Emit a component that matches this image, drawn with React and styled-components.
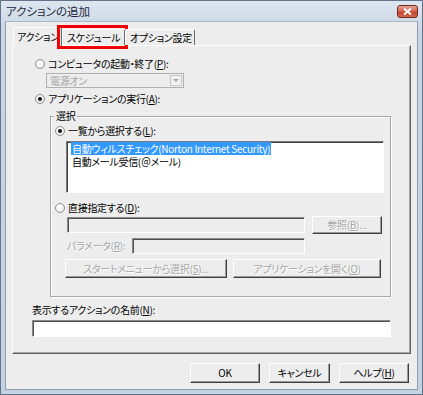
import React from 'react';
import styled, { createGlobalStyle } from 'styled-components';

const GlobalStyle = createGlobalStyle`
  html, body {
    margin: 0;
    padding: 0;
    background: #fff;
  }
  body {
    font-family: "Noto Sans CJK JP", "Liberation Sans", sans-serif;
  }
`;

const Window = styled.div`
  width: 423px;
  height: 395px;
  box-sizing: border-box;
  display: flex;
  flex-direction: column;
  padding: 0 4px 4px;
  border: 1px solid #60748c;
  background: linear-gradient(#dde6ef, #c9d6e4 30px, #c4d2e1);
  font-size: 10px;
  letter-spacing: -0.3px;
  font-feature-settings: "palt";
  color: #000;
`;

const TitleBar = styled.div`
  height: 20px;
  display: flex;
  align-items: flex-start;
  justify-content: space-between;
`;

const Title = styled.span`
  margin: 2px 0 0 1px;
  font-size: 11.5px;
  letter-spacing: 0;
  line-height: 16px;
  color: #1b2738;
`;

const CloseButton = styled.div`
  margin-top: 4px;
  width: 21px;
  height: 13px;
  box-sizing: border-box;
  border: 1px solid #6e2a22;
  border-radius: 3px;
  background: linear-gradient(#e9a496, #d2604c 50%, #c03c28 51%, #d26a50);
  display: flex;
  align-items: center;
  justify-content: center;
`;

const Body = styled.div`
  flex: 1;
  display: flex;
  flex-direction: column;
  padding: 5px 6px 0;
  background: #ededed;
  border: 1px solid #8d9db1;
  border-top-color: #a8b7c8;
`;

const TabStrip = styled.div`
  display: flex;
  align-items: flex-end;
  height: 18px;
  padding-left: 1px;
  position: relative;
  z-index: 1;
`;

const Tab = styled.div`
  position: relative;
  box-sizing: border-box;
  width: ${(p) => p.$width}px;
  height: ${(p) => (p.$active ? 19 : 16)}px;
  margin-bottom: ${(p) => (p.$active ? -1 : 0)}px;
  padding: ${(p) => (p.$active ? '2px 0 0 3px' : '1px 0 0 4px')};
  border-top: 1px solid #fff;
  border-left: 1px solid #fff;
  border-right: 1px solid #6a6a6a;
  border-radius: 2px 2px 0 0;
  background: #ededed;
  line-height: 13px;
  white-space: nowrap;

  ${(p) =>
    p.$marked &&
    `
    &::after {
      content: '';
      position: absolute;
      left: -6px;
      top: -5px;
      right: -4px;
      bottom: -4px;
      border: 3px solid #f00000;
    }
  `}
`;

const Panel = styled.div`
  height: 309px;
  box-sizing: border-box;
  display: flex;
  flex-direction: column;
  align-items: flex-start;
  padding: 11px 0 0 19px;
  border: 1px solid;
  border-color: #fff #5f5f5f #5f5f5f #fff;
  box-shadow: inset -1px -1px 0 #a8a8a8;
`;

const Option = styled.label`
  display: flex;
  align-items: center;
  height: 14px;
  margin: ${(p) => p.$margin || '0'};
  line-height: 14px;
  white-space: nowrap;
`;

const RadioDot = styled.span`
  width: 10px;
  height: 10px;
  box-sizing: border-box;
  margin-right: 3px;
  border: 1px solid #8f8f8f;
  border-radius: 50%;
  background: radial-gradient(circle at 35% 35%, #fff, #e6e6e6);
  display: flex;
  align-items: center;
  justify-content: center;

  &::after {
    content: '';
    width: 4px;
    height: 4px;
    border-radius: 50%;
    background: ${(p) => (p.$checked ? '#111' : 'transparent')};
  }
`;

const Combo = styled.div`
  width: 138px;
  height: 15px;
  box-sizing: border-box;
  margin: 2px 0 0 14px;
  display: flex;
  align-items: center;
  justify-content: space-between;
  border: 1px solid #b0b0b0;
  background: #ededed;
  color: #a3a3a3;
  padding-left: 3px;
  line-height: 13px;
`;

const ComboArrow = styled.span`
  width: 12px;
  height: 11px;
  margin-right: 1px;
  box-sizing: border-box;
  border: 1px solid #c8c8c8;
  background: #f2f2f2;
  display: flex;
  align-items: center;
  justify-content: center;

  &::after {
    content: '';
    border-left: 3px solid transparent;
    border-right: 3px solid transparent;
    border-top: 3px solid #a8a8a8;
  }
`;

const GroupBox = styled.div`
  position: relative;
  width: 341px;
  height: 181px;
  box-sizing: border-box;
  margin: 10px 0 0 18px;
  padding: 7px 0 0 4px;
  display: flex;
  flex-direction: column;
  align-items: flex-start;
  border: 1px solid #a6a6a6;
  box-shadow: 1px 1px 0 #fff, inset 1px 1px 0 #fff;
`;

const Legend = styled.span`
  position: absolute;
  top: -8px;
  left: 3px;
  padding: 0 2px;
  background: #ededed;
  line-height: 14px;
`;

const ListBox = styled.div`
  width: 318px;
  height: 52px;
  box-sizing: border-box;
  margin: 3px 0 0 11px;
  padding: 0 0 0 4px;
  border: 1px solid;
  border-color: #7a7a7a #fff #fff #7a7a7a;
  box-shadow: inset 1px 1px 0 #404040;
  background: #fff;
  display: flex;
  flex-direction: column;
  align-items: flex-start;
`;

const ListItem = styled.div`
  height: 13px;
  line-height: 13px;
  padding: 0 1px;
  white-space: nowrap;
  color: ${(p) => (p.$selected ? '#fff' : '#000')};
  background: ${(p) => (p.$selected ? '#3399ff' : 'transparent')};
`;

const Row = styled.div`
  display: flex;
  align-items: center;
  gap: ${(p) => p.$gap || 0}px;
  margin: ${(p) => p.$margin || '0'};
`;

const Field = styled.div`
  width: ${(p) => p.$width}px;
  height: ${(p) => p.$height || 16}px;
  box-sizing: border-box;
  margin: ${(p) => p.$margin || '0'};
  border: 1px solid;
  border-color: #8a8a8a #fff #fff #8a8a8a;
  box-shadow: inset 1px 1px 0 #505050;
  background: ${(p) => (p.$enabled ? '#fff' : '#ededed')};
`;

const DisabledText = styled.span`
  color: #a6a6a6;
  text-shadow: 1px 1px 0 #fff;
  line-height: 14px;
  white-space: nowrap;
  width: ${(p) => p.$width || 'auto'};
`;

const Button = styled.div`
  width: ${(p) => p.$width}px;
  height: ${(p) => p.$height || 18}px;
  box-sizing: border-box;
  display: flex;
  align-items: center;
  justify-content: center;
  border: 1px solid;
  border-color: #fff #3f3f3f #3f3f3f #fff;
  box-shadow: inset -1px -1px 0 #9a9a9a;
  background: #ededed;
  line-height: 14px;
  white-space: nowrap;
  color: ${(p) => (p.$disabled ? '#a6a6a6' : '#000')};
  text-shadow: ${(p) => (p.$disabled ? '1px 1px 0 #fff' : 'none')};
`;

const FieldLabel = styled.div`
  margin: 6px 0 0 0;
  line-height: 14px;
  white-space: nowrap;
`;

const Footer = styled.div`
  display: flex;
  justify-content: flex-end;
  gap: 9px;
  margin: 9px 2px 0 0;
`;

const U = styled.u`
  text-underline-offset: 1px;
`;

const Radio = ({ checked, children, margin }) => (
  <Option $margin={margin}>
    <RadioDot $checked={checked} />
    <span>{children}</span>
  </Option>
);

const App = () => (
  <>
    <GlobalStyle />
    <Window>
      <TitleBar>
        <Title>アクションの追加</Title>
        <CloseButton>
          <svg width="9" height="7" viewBox="0 0 9 7">
            <path d="M1 0.5 L8 6.5 M8 0.5 L1 6.5" stroke="#fff" strokeWidth="2" />
          </svg>
        </CloseButton>
      </TitleBar>
      <Body>
        <TabStrip>
          <Tab $active $width={49}>アクション</Tab>
          <Tab $width={63} $marked>スケジュール</Tab>
          <Tab $width={70}>オプション設定</Tab>
        </TabStrip>
        <Panel>
          <Radio margin="0 0 0 3px">
            コンピュータの起動・終了(<U>P</U>):
          </Radio>
          <Combo>
            <span>電源オン</span>
            <ComboArrow />
          </Combo>
          <Radio checked margin="4px 0 0 3px">
            アプリケーションの実行(<U>A</U>):
          </Radio>
          <GroupBox>
            <Legend>選択</Legend>
            <Radio checked>
              一覧から選択する(<U>L</U>):
            </Radio>
            <ListBox>
              <ListItem $selected>自動ウィルスチェック(Norton Internet Security)</ListItem>
              <ListItem>自動メール受信(＠メール)</ListItem>
            </ListBox>
            <Radio margin="8px 0 0 0">
              直接指定する(<U>D</U>):
            </Radio>
            <Row $gap={7} $margin="1px 0 0 12px">
              <Field $width={238} />
              <Button $width={70} $disabled>参照(<U>B</U>)...</Button>
            </Row>
            <Row $margin="4px 0 0 12px">
              <DisabledText $width="65px">パラメータ(<U>R</U>):</DisabledText>
              <Field $width={173} />
            </Row>
            <Row $gap={6} $margin="5px 0 0 10px">
              <Button $width={162} $height={19} $disabled>
                スタートメニューから選択(<U>S</U>)...
              </Button>
              <Button $width={148} $height={19} $disabled>
                アプリケーションを開く(<U>O</U>)
              </Button>
            </Row>
          </GroupBox>
          <FieldLabel>
            表示するアクションの名前(<U>N</U>):
          </FieldLabel>
          <Field $enabled $width={359} $height={17} $margin="3px 0 0 0" />
        </Panel>
        <Footer>
          <Button $width={70} $height={20}>OK</Button>
          <Button $width={61} $height={20}>キャンセル</Button>
          <Button $width={70} $height={20}>ヘルプ(<U>H</U>)</Button>
        </Footer>
      </Body>
    </Window>
  </>
);

export default App;
